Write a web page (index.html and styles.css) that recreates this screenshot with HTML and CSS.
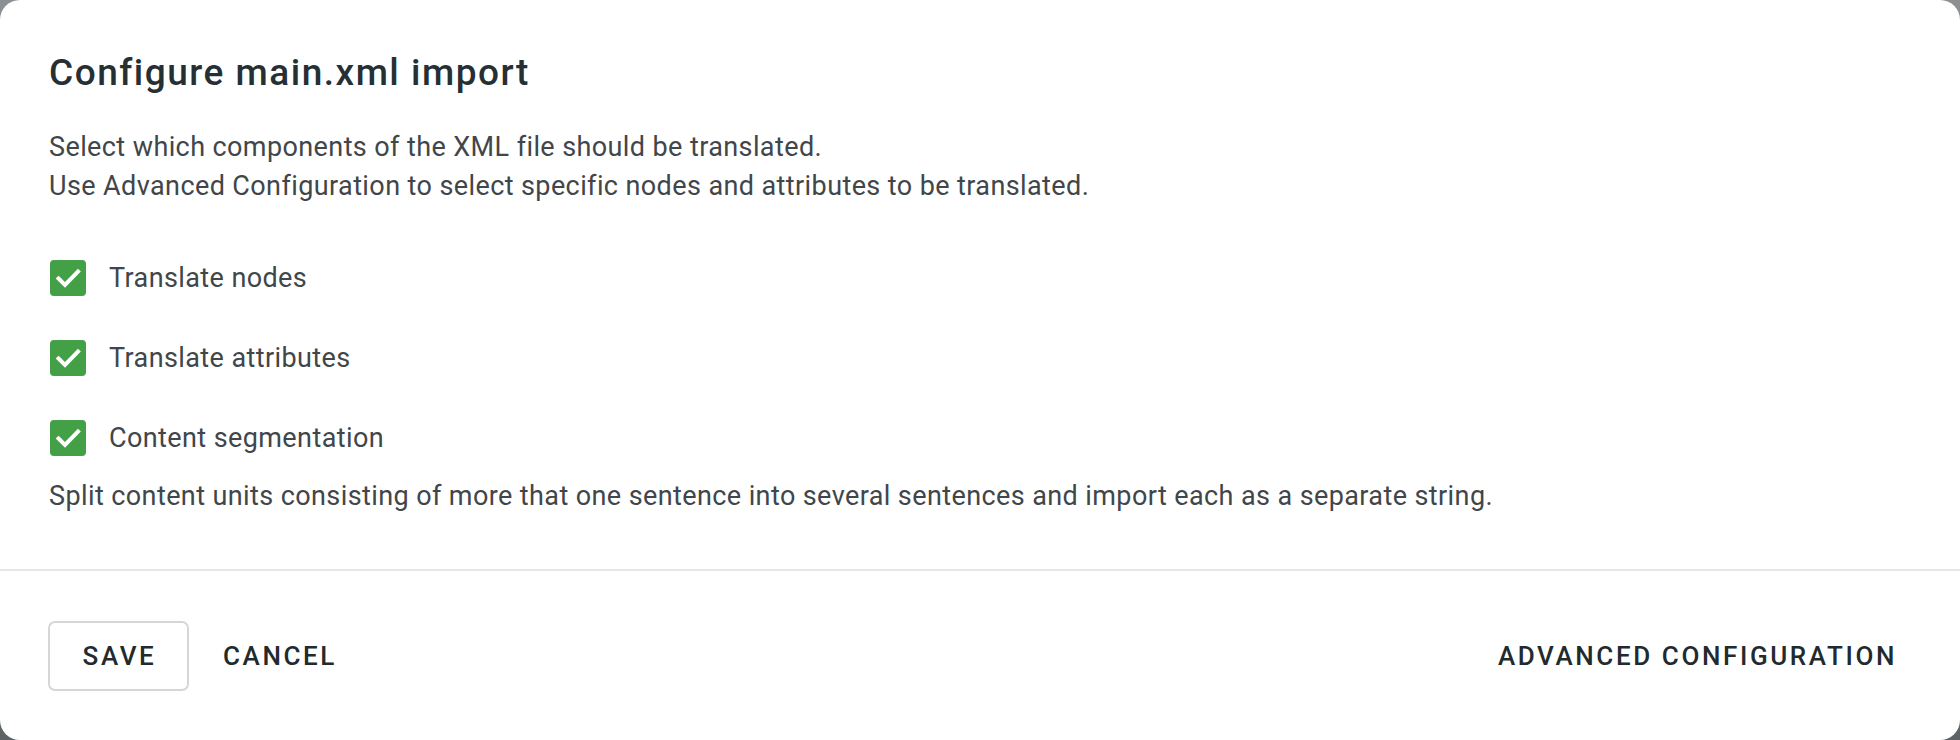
FILE: index.html
```html
<!DOCTYPE html>
<html lang="en">
<head>
<meta charset="utf-8">
<title>Configure main.xml import</title>
<link rel="stylesheet" href="styles.css">
</head>
<body>
<div class="backdrop">
  <div class="dialog">
    <div class="content">
      <h1 class="title">Configure main.xml import</h1>
      <p class="desc">Select which components of the XML file should be translated.<br>Use Advanced Configuration to select specific nodes and attributes to be translated.</p>
      <div class="options">
        <label class="option">
          <span class="box"><svg viewBox="0 0 36 36" width="36" height="36"><polyline points="8.5,18.5 15,25 28,11.5" fill="none" stroke="#fff" stroke-width="4" stroke-linecap="square"/></svg></span>
          <span class="label">Translate nodes</span>
        </label>
        <label class="option">
          <span class="box"><svg viewBox="0 0 36 36" width="36" height="36"><polyline points="8.5,18.5 15,25 28,11.5" fill="none" stroke="#fff" stroke-width="4" stroke-linecap="square"/></svg></span>
          <span class="label">Translate attributes</span>
        </label>
        <label class="option">
          <span class="box"><svg viewBox="0 0 36 36" width="36" height="36"><polyline points="8.5,18.5 15,25 28,11.5" fill="none" stroke="#fff" stroke-width="4" stroke-linecap="square"/></svg></span>
          <span class="label">Content segmentation</span>
        </label>
      </div>
      <p class="help">Split content units consisting of more that one sentence into several sentences and import each as a separate string.</p>
    </div>
    <div class="footer">
      <div class="left-actions">
        <button class="btn btn-outlined">SAVE</button>
        <button class="btn btn-text">CANCEL</button>
      </div>
      <button class="btn btn-text btn-advanced">ADVANCED CONFIGURATION</button>
    </div>
  </div>
</div>
</body>
</html>
```

FILE: styles.css
```css
* { box-sizing: border-box; }
html, body {
  margin: 0;
  padding: 0;
  width: 1960px;
  height: 740px;
  overflow: hidden;
}
body {
  font-family: Roboto, "Liberation Sans", Arial, sans-serif;
  background: #6c7072;
}
.backdrop {
  width: 1960px;
  height: 740px;
  background: linear-gradient(180deg, #8d9092 0%, #5e6365 100%);
}
.dialog {
  width: 1960px;
  height: 740px;
  background: #ffffff;
  border-radius: 20px;
  display: flex;
  flex-direction: column;
  overflow: hidden;
}
.content {
  padding: 51px 49px 0 49px;
  height: 571px;
  border-bottom: 2px solid #e6e6e6;
}
.title {
  margin: 0;
  font-size: 37px;
  line-height: 44px;
  font-weight: 500;
  letter-spacing: 1.5px;
  color: #263034;
}
.desc {
  margin: 33px 0 0 0;
  font-size: 27px;
  line-height: 39px;
  letter-spacing: 0.4px;
  color: #41464a;
}
.options {
  margin-top: 54px;
  display: flex;
  flex-direction: column;
  gap: 44px;
}
.option {
  display: flex;
  align-items: center;
  height: 36px;
  gap: 23px;
  padding-left: 1px;
}
.box {
  width: 36px;
  height: 36px;
  background: #43a047;
  border-radius: 4px;
  display: block;
}
.box svg { display: block; }
.label {
  font-size: 27px;
  line-height: 36px;
  letter-spacing: 0.4px;
  color: #41464a;
}
.help {
  margin: 21px 0 0 0;
  font-size: 27px;
  line-height: 39px;
  letter-spacing: 0.4px;
  color: #41464a;
}
.footer {
  flex: 1;
  display: flex;
  align-items: center;
  justify-content: space-between;
  padding: 0 29px 0 48px;
}
.left-actions {
  display: flex;
  align-items: center;
  gap: 0;
}
.btn {
  font-family: Roboto, "Liberation Sans", Arial, sans-serif;
  font-size: 26px;
  font-weight: 500;
  letter-spacing: 2.6px;
  color: #222a2e;
  background: transparent;
  border: none;
  height: 70px;
  padding: 0 34px;
  cursor: pointer;
}
.btn-outlined {
  width: 141px;
  border: 2px solid #d6d6d6;
  border-radius: 7px;
  padding: 0;
  padding-left: 2px;
}
.btn-text {
  padding: 0 34px;
}
```
